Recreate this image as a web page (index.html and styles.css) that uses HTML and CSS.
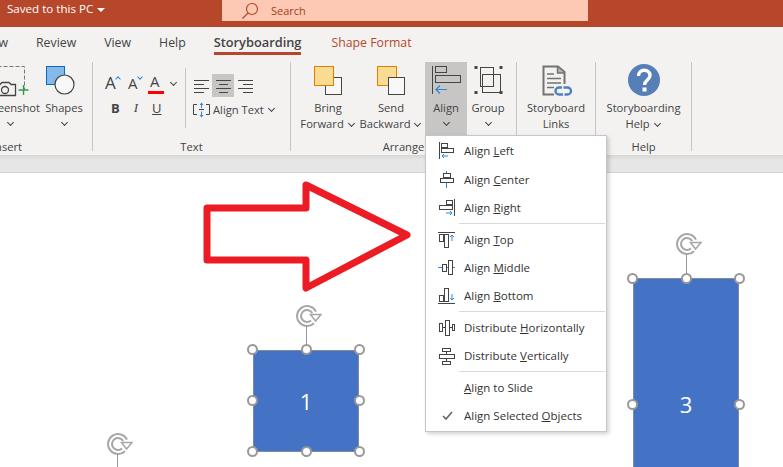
FILE: index.html
```html
<!DOCTYPE html>
<html lang="en">

<head>
  <meta charset="UTF-8" />
  <title>Storyboarding - Align menu</title>
  <link rel="stylesheet" href="styles.css">
</head>

<body>
  <!-- Title bar -->
  <header class="titlebar">
    <span class="saved">Saved to this PC</span>
    <span class="caret"></span>
    <div class="search">
      <svg class="search-icon" width="18" height="18" viewBox="0 0 18 18" fill="none" stroke="#b7472a" stroke-width="1.2">
        <circle cx="11" cy="7" r="5.5" />
        <path d="M7 11 L1.5 16.5" />
      </svg>
      <span>Search</span>
    </div>
  </header>

  <!-- Tabs -->
  <nav class="tabs">
    <span class="tab tab-cut">Slide Show</span>
    <span class="tab">Review</span>
    <span class="tab">View</span>
    <span class="tab">Help</span>
    <span class="tab active">Storyboarding</span>
    <span class="tab contextual">Shape Format</span>
  </nav>

  <!-- Ribbon -->
  <section class="ribbon">
    <div class="group group-insert">
      <div class="group-body">
        <div class="big big-screenshot">
          <svg class="big-icon" width="44" height="38" viewBox="0 0 44 38" fill="none">
            <path d="M2.5 4.5 H35.5 V28" stroke="#777" stroke-dasharray="4 2" />
            <path d="M7 22.5 H11 L13 20.5 H20 L22 22.5 H26.5 V33.5 H7 Z" fill="#f3f2f1" stroke="#444" stroke-width="1.3" />
            <circle cx="16" cy="28" r="3.5" stroke="#444" stroke-width="1.3" />
            <path d="M34.5 23 V33 M29.5 28 H39.5" stroke="#2e9e4f" stroke-width="1.4" />
          </svg>
          <span>Screenshot</span>
          <span class="chev-line"><i class="chev"></i></span>
        </div>
        <div class="big big-shapes">
          <svg class="big-icon" width="38" height="38" viewBox="0 0 38 38">
            <rect x="1.5" y="4.5" width="18" height="18" fill="#84b9ea" stroke="#0a6cc0" />
            <circle cx="19.5" cy="22.5" r="9.5" fill="#f8f8f8" stroke="#444" stroke-width="1.2" />
          </svg>
          <span>Shapes</span>
          <span class="chev-line"><i class="chev"></i></span>
        </div>
      </div>
      <div class="group-label">Insert</div>
    </div>

    <div class="group group-text">
      <div class="group-body">
        <div class="font-col">
          <div class="font-row">
            <span class="glyph glyph-grow">A<i class="mini up"></i></span>
            <span class="glyph glyph-shrink">A<i class="mini down"></i></span>
            <span class="glyph glyph-color">A</span>
            <i class="chev font-chev"></i>
          </div>
          <div class="font-row format-row">
            <b>B</b>
            <em>I</em>
            <u>U</u>
          </div>
        </div>
        <div class="para-col">
          <div class="para-row">
            <span class="para-btn">
              <svg width="15" height="14" viewBox="0 0 15 14" stroke="#444"><path d="M0 1.5 H15 M0 5.5 H10 M0 9.5 H15 M0 13.5 H10" /></svg>
            </span>
            <span class="para-btn on">
              <svg width="15" height="14" viewBox="0 0 15 14" stroke="#444"><path d="M0 1.5 H15 M3 5.5 H12 M0 9.5 H15 M3 13.5 H12" /></svg>
            </span>
            <span class="para-btn">
              <svg width="15" height="14" viewBox="0 0 15 14" stroke="#444"><path d="M0 1.5 H15 M5 5.5 H15 M0 9.5 H15 M5 13.5 H15" /></svg>
            </span>
          </div>
          <div class="align-text">
            <svg width="17" height="16" viewBox="0 0 17 16" fill="none">
              <path d="M4 2.5 H.5 V12.5 H4 M13 2.5 H16.5 V12.5 H13" stroke="#444" />
              <path d="M8.5 3 V6 M8.5 9.5 V13" stroke="#2b88d8" />
              <path d="M6.5 3 L8.5 .5 L10.5 3 Z M6.5 13 L8.5 15.5 L10.5 13 Z" fill="#2b88d8" />
              <path d="M6 7.5 H11" stroke="#444" />
            </svg>
            <span>Align Text</span>
            <i class="chev"></i>
          </div>
        </div>
      </div>
      <div class="group-label">Text</div>
    </div>

    <div class="group group-arrange">
      <div class="group-body">
        <div class="big big-bring">
          <svg class="big-icon" width="54" height="38" viewBox="0 0 54 38">
            <rect x="24.5" y="15.5" width="16" height="17" fill="#f8f8f8" stroke="#444" />
            <rect x="13.5" y="4.5" width="19" height="19" fill="#f9dc92" stroke="#e07e00" />
          </svg>
          <span>Bring</span>
          <span>Forward <i class="chev"></i></span>
        </div>
        <div class="big big-send">
          <svg class="big-icon" width="62" height="38" viewBox="0 0 62 38">
            <rect x="17.5" y="4.5" width="19" height="19" fill="#f9dc92" stroke="#e07e00" />
            <rect x="28.5" y="15.5" width="16" height="17" fill="#f8f8f8" stroke="#444" />
          </svg>
          <span>Send</span>
          <span>Backward <i class="chev"></i></span>
        </div>
        <div class="big big-align">
          <svg class="big-icon" width="42" height="38" viewBox="0 0 42 38" fill="none">
            <path d="M7.5 4 V32" stroke="#444" />
            <rect x="10.5" y="4.5" width="11" height="6" stroke="#444" />
            <rect x="10.5" y="13.5" width="25" height="7" stroke="#444" />
            <path d="M22 27.5 H11 M15 23.5 L11 27.5 L15 31.5" stroke="#2b88d8" stroke-width="1.2" />
          </svg>
          <span>Align</span>
          <span class="chev-line"><i class="chev"></i></span>
        </div>
        <div class="big big-group">
          <svg class="big-icon" width="42" height="38" viewBox="0 0 42 38" fill="none" stroke="#444">
            <rect x="13.5" y="5.5" width="13" height="19" />
            <rect x="15.5" y="12.5" width="18" height="18" />
            <path d="M7.5 4 H10.5 V7 H7.5 Z M32.5 4 H35.5 V7 H32.5 Z M7.5 29 H10.5 V32 H7.5 Z M32.5 29 H35.5 V32 H32.5 Z" fill="#444" stroke="none" />
          </svg>
          <span>Group</span>
          <span class="chev-line"><i class="chev"></i></span>
        </div>
      </div>
      <div class="group-label">Arrange</div>
    </div>

    <div class="group group-links">
      <div class="group-body">
        <div class="big">
          <svg class="big-icon" width="34" height="38" viewBox="0 0 34 38" fill="none">
            <path d="M25.5 22 V10 L19 4.5 H4.5 V32.5 H15" stroke="#737373" stroke-width="2" />
            <path d="M18.5 5 V11 H25" fill="#b5b5b5" stroke="#737373" stroke-width="1.5" />
            <path d="M8 12 H15 M8 16.5 H22 M8 21 H22 M8 25.5 H15" stroke="#737373" stroke-width="1.5" />
            <path d="M23 25.5 H20 A3.5 3.5 0 0 0 20 32.5 H24 M24.5 25.5 H28.5 A3.5 3.5 0 0 1 28.5 32.5 H25.5" stroke="#4f7fbf" stroke-width="2.4" />
          </svg>
          <span>Storyboard</span>
          <span>Links</span>
        </div>
      </div>
    </div>

    <div class="group group-help">
      <div class="group-body">
        <div class="big">
          <svg class="big-icon" width="34" height="38" viewBox="0 0 34 38">
            <circle cx="17" cy="18" r="16" fill="#567fb8" />
            <path d="M11.5 14 C11.5 6.5 23 6.5 23 13.5 C23 18 17.5 18 17.5 23" fill="none" stroke="#fff" stroke-width="3.4" />
            <rect x="15.5" y="25.5" width="4" height="4" fill="#fff" />
          </svg>
          <span>Storyboarding</span>
          <span>Help <i class="chev"></i></span>
        </div>
      </div>
      <div class="group-label">Help</div>
    </div>
  </section>
  <div class="ribbon-shadow"></div>

  <!-- Slide canvas -->
  <main class="canvas">
    <svg class="block-arrow" width="214" height="118" viewBox="0 0 214 118" fill="none">
      <path d="M4 28 H103 V5 L204 55 L103 108 V80 H4 Z" stroke="#ed1c24" stroke-width="7" stroke-linejoin="round" />
    </svg>

    <svg class="rotate rotate-1" width="26" height="24" viewBox="0 0 26 24" fill="none" stroke="#a6a6a6">
      <path d="M20 7.6 A10 10 0 1 0 18 19.2" stroke-width="2" />
      <path d="M16.2 9 A6 6 0 1 0 15 16.5" stroke-width="2" />
      <path d="M14.5 10.5 H25 L19.5 17 Z" fill="#fff" stroke-width="1.5" />
    </svg>
    <span class="stem stem-1"></span>
    <div class="shape shape-1">1</div>
    <span class="handle" style="left: 252px; top: 176px"></span>
    <span class="handle" style="left: 306px; top: 176px"></span>
    <span class="handle" style="left: 359px; top: 176px"></span>
    <span class="handle" style="left: 252px; top: 227px"></span>
    <span class="handle" style="left: 359px; top: 227px"></span>
    <span class="handle" style="left: 252px; top: 278px"></span>
    <span class="handle" style="left: 306px; top: 278px"></span>
    <span class="handle" style="left: 359px; top: 278px"></span>

    <svg class="rotate rotate-2" width="26" height="24" viewBox="0 0 26 24" fill="none" stroke="#a6a6a6">
      <path d="M20 7.6 A10 10 0 1 0 18 19.2" stroke-width="2" />
      <path d="M16.2 9 A6 6 0 1 0 15 16.5" stroke-width="2" />
      <path d="M14.5 10.5 H25 L19.5 17 Z" fill="#fff" stroke-width="1.5" />
    </svg>
    <span class="stem stem-2"></span>

    <svg class="rotate rotate-3" width="26" height="24" viewBox="0 0 26 24" fill="none" stroke="#a6a6a6">
      <path d="M20 7.6 A10 10 0 1 0 18 19.2" stroke-width="2" />
      <path d="M16.2 9 A6 6 0 1 0 15 16.5" stroke-width="2" />
      <path d="M14.5 10.5 H25 L19.5 17 Z" fill="#fff" stroke-width="1.5" />
    </svg>
    <span class="stem stem-3"></span>
    <div class="shape shape-3">3</div>
    <span class="handle" style="left: 632px; top: 105px"></span>
    <span class="handle" style="left: 686px; top: 105px"></span>
    <span class="handle" style="left: 739px; top: 105px"></span>
    <span class="handle" style="left: 632px; top: 231px"></span>
    <span class="handle" style="left: 739px; top: 231px"></span>
  </main>

  <!-- Align dropdown -->
  <ul class="menu">
    <li class="item item-first">
      <svg width="18" height="18" viewBox="0 0 18 18" fill="none" stroke="#444">
        <path d="M1.5 0 V17" />
        <rect x="3.5" y="1.5" width="6" height="4" />
        <rect x="3.5" y="6.5" width="12" height="4" />
        <path d="M10 14 H4 M6 12 L4 14 L6 16" stroke="#2b88d8" />
      </svg>
      <span>Align <u>L</u>eft</span>
    </li>
    <li class="item">
      <svg width="18" height="18" viewBox="0 0 18 18" fill="none" stroke="#444">
        <path d="M8.5 0 V17" stroke="#2b88d8" />
        <rect x="5.5" y="2.5" width="7" height="4" fill="#fff" />
        <rect x="2.5" y="7.5" width="13" height="4" fill="#fff" />
      </svg>
      <span>Align <u>C</u>enter</span>
    </li>
    <li class="item">
      <svg width="18" height="18" viewBox="0 0 18 18" fill="none" stroke="#444">
        <path d="M16.5 0 V17" />
        <rect x="8.5" y="1.5" width="6" height="4" />
        <rect x="1.5" y="6.5" width="13" height="4" />
        <path d="M8 14 H14 M12 12 L14 14 L12 16" stroke="#2b88d8" />
      </svg>
      <span>Align <u>R</u>ight</span>
    </li>
    <li class="sep"></li>
    <li class="item">
      <svg width="18" height="18" viewBox="0 0 18 18" fill="none" stroke="#444">
        <path d="M0 1.5 H17" />
        <rect x="1.5" y="3.5" width="4" height="7" />
        <rect x="6.5" y="3.5" width="4" height="13" />
        <path d="M14 10 V4 M12 6 L14 4 L16 6" stroke="#2b88d8" />
      </svg>
      <span>Align <u>T</u>op</span>
    </li>
    <li class="item">
      <svg width="18" height="18" viewBox="0 0 18 18" fill="none" stroke="#444">
        <path d="M0 8.5 H17" stroke="#2b88d8" />
        <rect x="4.5" y="5.5" width="4" height="7" fill="#fff" />
        <rect x="10.5" y="1.5" width="4" height="14" fill="#fff" />
      </svg>
      <span>Align <u>M</u>iddle</span>
    </li>
    <li class="item">
      <svg width="18" height="18" viewBox="0 0 18 18" fill="none" stroke="#444">
        <path d="M0 16.5 H17" />
        <rect x="1.5" y="8.5" width="4" height="6" />
        <rect x="6.5" y="1.5" width="4" height="13" />
        <path d="M14 7 V13 M12 11 L14 13 L16 11" stroke="#2b88d8" />
      </svg>
      <span>Align <u>B</u>ottom</span>
    </li>
    <li class="sep"></li>
    <li class="item">
      <svg width="18" height="18" viewBox="0 0 18 18" fill="none" stroke="#444">
        <rect x="1.5" y="4.5" width="3" height="8" />
        <rect x="7.5" y="1.5" width="4" height="15" />
        <rect x="14.5" y="5.5" width="2" height="6" />
        <path d="M4.5 8.5 H7.5 M11.5 8.5 H14.5" />
      </svg>
      <span>Distribute <u>H</u>orizontally</span>
    </li>
    <li class="item">
      <svg width="18" height="18" viewBox="0 0 18 18" fill="none" stroke="#444">
        <rect x="4.5" y="1.5" width="8" height="3" />
        <rect x="1.5" y="7.5" width="15" height="4" />
        <rect x="4.5" y="14.5" width="8" height="3" />
        <path d="M8.5 4.5 V7.5 M8.5 11.5 V14.5" />
      </svg>
      <span>Distribute <u>V</u>ertically</span>
    </li>
    <li class="sep"></li>
    <li class="item">
      <svg width="18" height="18"></svg>
      <span><u>A</u>lign to Slide</span>
    </li>
    <li class="item">
      <svg width="18" height="18" viewBox="0 0 18 18" fill="none" stroke="#666" stroke-width="1.6">
        <path d="M5 9 L8 12 L14 5" />
      </svg>
      <span>Align Selected <u>O</u>bjects</span>
    </li>
  </ul>
</body>

</html>
```

FILE: styles.css
```css
* {
  margin: 0;
  padding: 0;
  box-sizing: border-box;
}

html,
body {
  width: 783px;
  height: 467px;
  overflow: hidden;
}

body {
  position: relative;
  font-family: "Open Sans", "Noto Sans", sans-serif;
  font-size: 11.2px;
  color: #444;
  background-color: #fff;
}

/* Title bar */
.titlebar {
  height: 27px;
  display: flex;
  align-items: flex-start;
  padding-left: 7px;
  color: #fff;
  background-color: #b7472a;
}

.saved {
  width: 90px;
  font-size: 11.6px;
  line-height: 18px;
  white-space: nowrap;
}

.caret {
  margin-top: 8px;
  border-left: 4px solid transparent;
  border-right: 4px solid transparent;
  border-top: 4px solid #fff;
}

.search {
  width: 366px;
  height: 21px;
  margin-left: 117px;
  padding-left: 19px;
  display: flex;
  align-items: center;
  font-size: 11px;
  color: #a33f22;
  background-color: #fdc9b4;
}

.search-icon {
  margin-right: 12px;
}

/* Tabs */
.tabs {
  height: 29px;
  display: flex;
  gap: 28px;
  overflow: hidden;
  background-color: #f3f2f1;
}

.tab {
  height: 28px;
  padding-top: 6px;
  font-size: 12.3px;
  line-height: 19px;
  white-space: nowrap;
  border-bottom: 3px solid transparent;
}

.tab-cut {
  flex: none;
  width: 80px;
  margin-left: -72px;
  text-align: right;
}

.tab.active {
  font-size: 12.8px;
  font-weight: 600;
  border-bottom-color: #b7472a;
}

.tab.contextual {
  margin-left: 2px;
  color: #b7472a;
}

/* Ribbon */
.ribbon {
  height: 99px;
  padding-top: 6px;
  display: flex;
  overflow: hidden;
  background-color: #f3f2f1;
}

.ribbon-shadow {
  height: 18px;
  background: linear-gradient(#d6d6d6, #e6e6e6 5px);
  border-bottom: 1px solid #d2d2d2;
}

.group {
  flex: none;
  height: 89px;
  border-right: 1px solid #c8c6c4;
}

.group-body {
  height: 77px;
  display: flex;
}

.group-label {
  height: 12px;
  line-height: 16px;
  text-align: center;
}

.group-insert {
  width: 171px;
  margin-left: -78px;
}

.group-insert .group-body {
  justify-content: flex-end;
  gap: 5px;
  padding-right: 9px;
}

.group-text {
  width: 198px;
}

.group-arrange {
  width: 226px;
}

.group-links {
  width: 79px;
}

.group-help {
  width: 96px;
}

.big {
  flex: 1;
  display: flex;
  flex-direction: column;
  align-items: center;
  line-height: 16px;
  white-space: nowrap;
}

.big-icon {
  flex: none;
}

.big-screenshot,
.big-shapes {
  flex: none;
}

.group-arrange .group-body {
  padding-left: 10px;
}

.big-bring {
  flex: none;
  width: 54px;
  margin-right: 5px;
}

.big-send {
  flex: none;
  width: 62px;
  margin-right: 3px;
}

.big-align,
.big-group {
  flex: none;
  width: 42px;
}

.big-align {
  height: 74px;
  background-color: #c8c6c4;
}

.chev-line {
  height: 16px;
  display: flex;
  justify-content: center;
}

.chev {
  display: inline-block;
  width: 5px;
  height: 5px;
  margin: 0 2px 3px 2px;
  vertical-align: middle;
  border-right: 1px solid #444;
  border-bottom: 1px solid #444;
  transform: rotate(45deg);
}

.chev-line .chev {
  margin-top: 4px;
}

/* Text group */
.font-col {
  width: 93px;
  height: 60px;
  margin-top: 6px;
  padding: 4px 0 0 12px;
  border-right: 1px solid #c8c6c4;
}

.font-row {
  height: 22px;
  display: flex;
  align-items: center;
}

.glyph {
  position: relative;
  font-size: 17px;
  line-height: 22px;
}

.glyph-grow {
  width: 23px;
}

.glyph-shrink {
  width: 20px;
  font-size: 15px;
}

.glyph-color {
  width: 16px;
  height: 22px;
  padding-left: 2px;
  font-size: 15px;
  line-height: 19px;
  border-bottom: 3px solid #f00;
}

.font-chev {
  margin: 0 0 2px 7px;
}

.mini {
  position: absolute;
  left: 11px;
  top: 5px;
  width: 4px;
  height: 4px;
  border-left: 1px solid #2b88d8;
  border-top: 1px solid #2b88d8;
  transform: rotate(45deg);
}

.mini.down {
  left: 10px;
  top: 3px;
  transform: rotate(225deg);
}

.format-row {
  margin-top: 3px;
  padding-left: 6px;
  gap: 14px;
  font-size: 13px;
}

.format-row em {
  font-family: "Liberation Serif", serif;
}

.para-col {
  padding: 12px 0 0 4px;
}

.para-row {
  display: flex;
}

.para-btn {
  width: 22px;
  height: 23px;
  display: flex;
  align-items: center;
  justify-content: center;
}

.para-btn.on {
  background-color: #c8c6c4;
}

.align-text {
  margin: 5px 0 0 3px;
  height: 16px;
  display: flex;
  align-items: center;
  gap: 3px;
  line-height: 16px;
}

/* Canvas */
.canvas {
  position: relative;
  height: 294px;
  overflow: hidden;
}

.block-arrow {
  position: absolute;
  left: 203px;
  top: 7px;
}

.shape {
  position: absolute;
  display: flex;
  align-items: center;
  justify-content: center;
  font-size: 22px;
  color: #fff;
  background-color: #4472c4;
  border: 1px solid #7f8a9c;
}

.shape-1 {
  left: 253px;
  top: 177px;
  width: 106px;
  height: 102px;
}

.shape-3 {
  left: 633px;
  top: 105px;
  width: 106px;
  height: 252px;
}

.handle {
  position: absolute;
  z-index: 1;
  width: 11px;
  height: 11px;
  margin: -5px 0 0 -5px;
  background-color: #fff;
  border: 2px solid #999;
  border-radius: 50%;
}

.rotate {
  position: absolute;
}

.rotate-1 {
  left: 296px;
  top: 131px;
}

.rotate-2 {
  left: 107px;
  top: 259px;
}

.rotate-3 {
  left: 676px;
  top: 59px;
}

.stem {
  position: absolute;
  width: 1px;
  background-color: #999;
}

.stem-1 {
  left: 306px;
  top: 153px;
  height: 20px;
}

.stem-2 {
  left: 117px;
  top: 281px;
  height: 13px;
}

.stem-3 {
  left: 686px;
  top: 81px;
  height: 20px;
}

/* Align menu */
.menu {
  position: absolute;
  z-index: 2;
  left: 425px;
  top: 135px;
  width: 182px;
  height: 297px;
  padding-top: 1px;
  list-style: none;
  background-color: #fff;
  border: 1px solid #c8c6c4;
  box-shadow: 2px 2px 4px rgba(0, 0, 0, 0.18);
}

.item {
  height: 28px;
  padding-left: 12px;
  display: flex;
  align-items: center;
  gap: 8px;
  font-size: 11.5px;
  line-height: 16px;
  color: #333;
  white-space: nowrap;
}

.item-first {
  height: 29px;
  padding-bottom: 2px;
}

.sep {
  height: 1px;
  margin: 1px 1px 2px 33px;
  background-color: #d9d9d9;
}
```
